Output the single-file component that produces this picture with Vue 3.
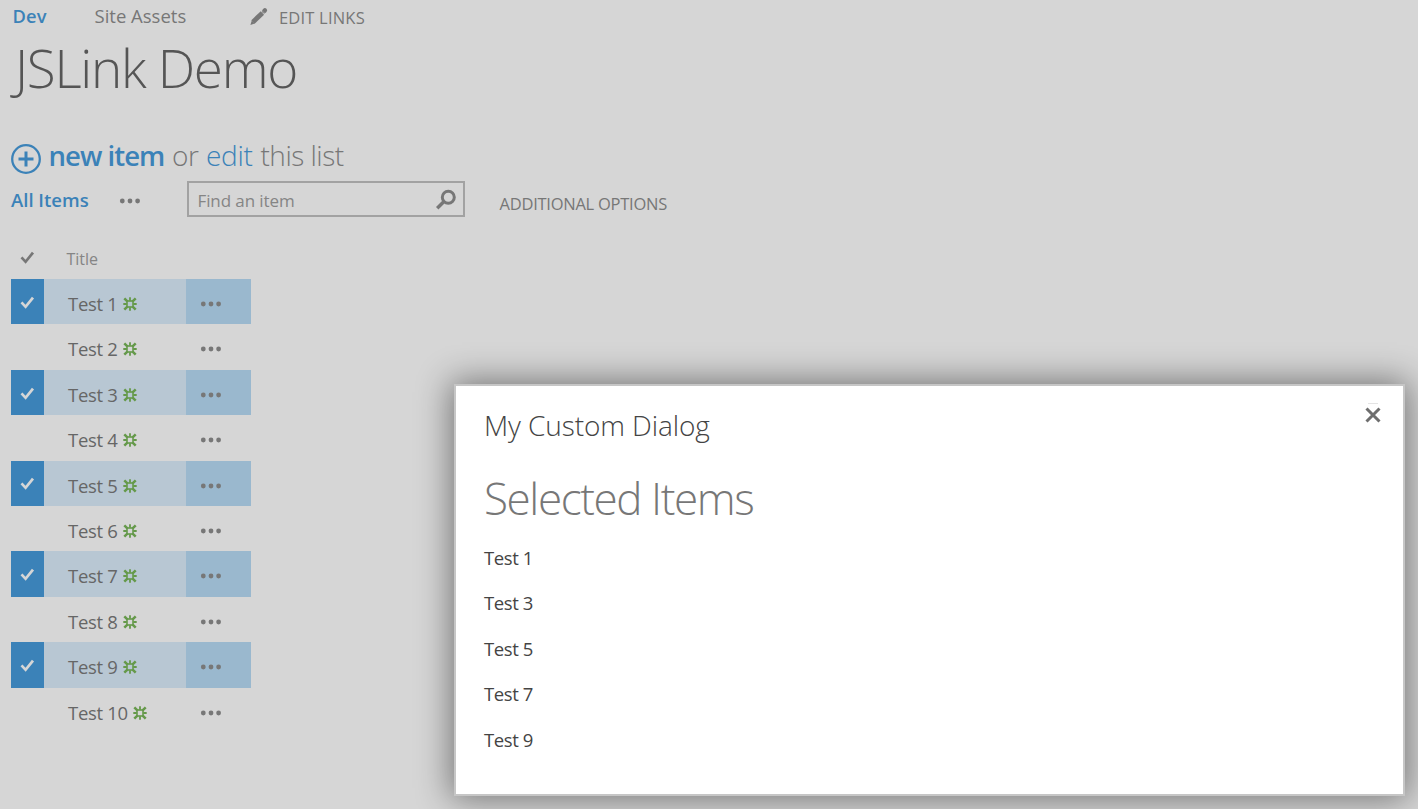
<script setup>
const items = Array.from({ length: 10 }, (_, i) => ({
  title: `Test ${i + 1}`,
  selected: i % 2 === 0,
}))
const selectedItems = items.filter((item) => item.selected)
</script>

<template>
  <div class="page">
    <nav class="nav">
      <a class="site">Dev</a>
      <a class="assets">Site Assets</a>
      <svg class="pencil" width="20" height="20" viewBox="0 0 20 20">
        <path d="M1.4 19 2.8 14.6 5.8 17.6Z" fill="#777" />
        <path d="M4 15.9 13.4 6.9" stroke="#777" stroke-width="4.8" />
        <path d="M15.1 5.2 15.9 4.4" stroke="#777" stroke-width="4.4" stroke-linecap="round" />
        <path d="M12.9 4.6 16 7.6" stroke="#a4a4a4" stroke-width="0.9" />
      </svg>
      <a class="edit-links">EDIT LINKS</a>
    </nav>

    <h1 class="title">JSLink Demo</h1>

    <div class="hero">
      <svg class="plus" width="32" height="32" viewBox="0 0 32 32" fill="none" stroke="#3b82b8">
        <circle cx="16" cy="16" r="13.8" stroke-width="2.3" />
        <path d="M16 8.5v15M8.5 16h15" stroke-width="3" />
      </svg>
      <a class="new">new item</a>
      <span class="or">or</span>
      <a class="edit">edit</a>
      <span class="this">this list</span>
    </div>

    <div class="toolbar">
      <a class="view">All Items</a>
      <svg class="dots" width="22" height="6" viewBox="0 0 22 6" fill="#777">
        <circle cx="3.3" cy="3" r="2.4" /><circle cx="11" cy="3" r="2.4" /><circle cx="18.6" cy="3" r="2.4" />
      </svg>
      <div class="search">
        <span>Find an item</span>
        <svg width="22" height="22" viewBox="0 0 22 22" fill="none" stroke="#777">
          <circle cx="13.3" cy="8.2" r="6" stroke-width="3" />
          <path d="M9 12.5 2.2 19.3" stroke-width="3.4" />
        </svg>
      </div>
      <span class="options">ADDITIONAL OPTIONS</span>
    </div>

    <div class="list">
      <div class="row head">
        <div class="cell-check">
          <svg class="check" width="15" height="13" viewBox="0 0 15 13"><path d="M1.5 6.3 5.6 10.8 13 1.6" /></svg>
        </div>
        <div class="cell-title">Title</div>
      </div>
      <div v-for="item in items" :key="item.title" class="row" :class="{ selected: item.selected }">
        <div class="cell-check">
          <svg v-if="item.selected" class="check" width="15" height="13" viewBox="0 0 15 13">
            <path d="M1.5 6.3 5.6 10.8 13 1.6" />
          </svg>
        </div>
        <div class="cell-title">
          <span>{{ item.title }}</span>
          <svg class="burst" width="14" height="14" viewBox="0 0 14 14" fill="none" stroke="#65994a">
            <rect x="4" y="4" width="6" height="6" stroke-width="1.6" />
            <path d="M7 .3v3.5M7 10.2v3.5M.3 7h3.5M10.2 7h3.5" stroke-width="1.8" />
            <path d="M1.3 1.3 4.4 4.4M12.7 1.3 9.6 4.4M1.3 12.7 4.4 9.6M12.7 12.7 9.6 9.6" stroke-width="2.5" />
          </svg>
        </div>
        <div class="cell-menu">
          <svg width="22" height="6" viewBox="0 0 22 6" fill="#777">
            <circle cx="3.3" cy="3" r="2.4" /><circle cx="11" cy="3" r="2.4" /><circle cx="18.6" cy="3" r="2.4" />
          </svg>
        </div>
      </div>
    </div>

    <section class="dialog">
      <svg class="close" width="18" height="22" viewBox="0 0 18 22" fill="none">
        <path d="M4 2.5h10" stroke="#e4e4e4" />
        <path d="M2.5 7.5 15.5 20.5M15.5 7.5 2.5 20.5" stroke="#6e6e6e" stroke-width="3" />
      </svg>
      <h2>My Custom Dialog</h2>
      <h3>Selected Items</h3>
      <p v-for="item in selectedItems" :key="item.title">{{ item.title }}</p>
    </section>
  </div>
</template>

<style>
body {
  background: #d6d6d6;
}
</style>

<style scoped>
.page {
  position: relative;
  width: 1418px;
  height: 809px;
  overflow: hidden;
  background: #d6d6d6;
  color: #777;
  font-family: "Open Sans", "Noto Sans", sans-serif;
  white-space: nowrap;
}
svg {
  display: block;
  flex: none;
}
h1, h2, h3, p {
  margin: 0;
  font-weight: 400;
}
.nav {
  display: flex;
  height: 32px;
  line-height: 32px;
  padding-left: 12.5px;
}
.site {
  width: 82px;
  color: #3b82b8;
  font-size: 18.3px;
  font-weight: 600;
  letter-spacing: 0.1px;
}
.assets {
  width: 154.5px;
  font-size: 18.5px;
}
.pencil {
  margin: 6px 10px 0 0;
}
.edit-links {
  font-size: 16.5px;
  line-height: 35px;
  letter-spacing: 0.2px;
}
.title {
  height: 70px;
  line-height: 72px;
  padding-left: 15px;
  color: #555;
  font-size: 53px;
  font-weight: 300;
  letter-spacing: -1.3px;
}
.hero {
  display: flex;
  height: 50px;
  margin-top: 28px;
  padding-left: 10px;
  line-height: 50px;
  font-size: 28px;
  font-weight: 300;
  letter-spacing: -0.5px;
}
.plus {
  margin: 13px 6.5px 0 0;
}
.new {
  width: 123.5px;
  color: #3b82b8;
  font-size: 27.5px;
  font-weight: 600;
  line-height: 51px;
  letter-spacing: -0.95px;
}
.or {
  width: 34px;
}
.edit {
  width: 54.5px;
  color: #3b82b8;
  letter-spacing: -0.3px;
}
.toolbar {
  display: flex;
  height: 36px;
  margin-top: 1px;
  padding-left: 11px;
  line-height: 38px;
}
.view {
  width: 108px;
  color: #3b82b8;
  font-size: 18.5px;
  font-weight: 600;
}
.dots {
  margin: 17px 46px 0 0;
}
.search {
  box-sizing: border-box;
  display: flex;
  justify-content: space-between;
  width: 278px;
  height: 36px;
  border: 2px solid #a2a2a2;
  padding: 0 6px 0 8.5px;
  font-size: 17px;
  line-height: 35px;
  letter-spacing: -0.1px;
  color: #858585;
}
.search svg {
  margin-top: 6px;
}
.options {
  margin-left: 34.5px;
  font-size: 16.5px;
  line-height: 46px;
  letter-spacing: -0.25px;
}
.list {
  width: 240px;
  margin: 23px 0 0 11px;
}
.row {
  display: grid;
  grid-template-columns: 33px 142px 65px;
  grid-template-rows: 100%;
  height: 45.4px;
  font-size: 18.5px;
  line-height: 49px;
  letter-spacing: -0.3px;
}
.head {
  height: 39.1px;
  line-height: 38px;
  font-size: 16px;
  letter-spacing: 0;
}
.cell-check {
  box-sizing: border-box;
  padding: 16.8px 0 0 9px;
}
.head .cell-check {
  padding-top: 11px;
}
.check {
  fill: none;
  stroke: #777;
  stroke-width: 2.7;
}
.selected .check {
  stroke: #d6d6d6;
}
.cell-title {
  display: flex;
  gap: 5px;
  padding-left: 24px;
  color: #666;
}
.head .cell-title {
  padding-left: 22.5px;
  color: #858585;
}
.burst {
  margin-top: 18px;
}
.cell-menu {
  padding: 22px 0 0 14px;
}
.selected .cell-check {
  background: #3b82b8;
}
.selected .cell-title {
  background: #b8c7d3;
}
.selected .cell-menu {
  background: #9ab8ce;
}
.dialog {
  box-sizing: border-box;
  position: absolute;
  left: 454px;
  top: 384px;
  width: 951px;
  height: 412px;
  padding: 16px 28px;
  border: 2px solid #c6c6c6;
  background: #fff;
  box-shadow: 0 0 32px 3px rgba(0, 0, 0, 0.46);
  color: #444;
}
.close {
  position: absolute;
  right: 21px;
  top: 15px;
}
.dialog h2 {
  height: 46px;
  line-height: 46px;
  font-size: 28px;
  font-weight: 300;
  letter-spacing: -0.1px;
}
.dialog h3 {
  height: 87px;
  line-height: 100px;
  color: #777;
  font-size: 44px;
  font-weight: 300;
  letter-spacing: -1.4px;
}
.dialog p {
  height: 45.4px;
  line-height: 46.6px;
  font-size: 18.5px;
  letter-spacing: -0.4px;
}
</style>
